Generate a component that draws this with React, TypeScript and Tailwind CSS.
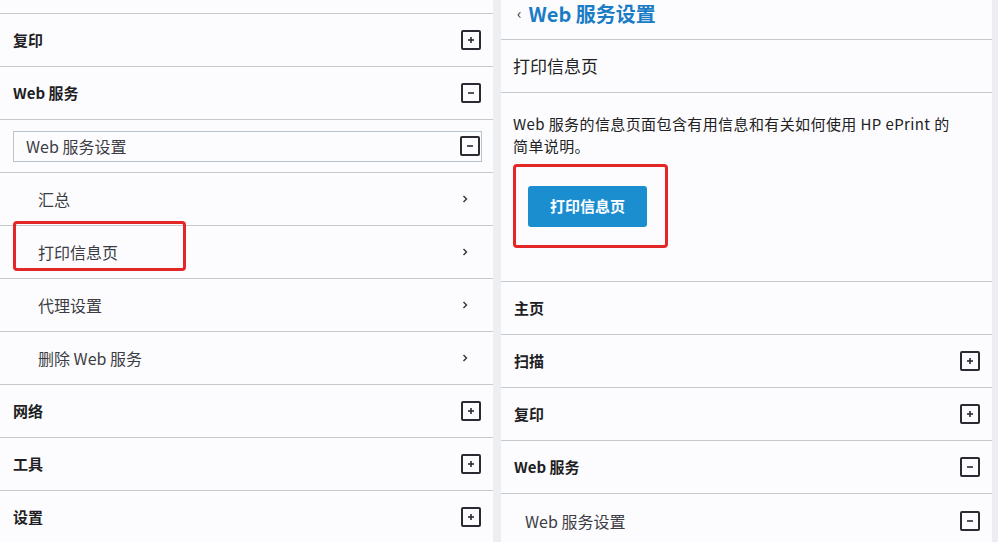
import React from "react";

const font = { fontFamily: '"Noto Sans CJK SC", "Noto Sans", sans-serif' };

function Box({ minus }: { minus?: boolean }) {
  return (
    <span className="flex h-[20px] w-[20px] items-center justify-center rounded-[2px] border-2 border-[#2a2a33]">
      <svg width="10" height="10" viewBox="0 0 10 10">
        <path d="M2 5h6" stroke="#2a2a33" strokeWidth="1.6" />
        {!minus && <path d="M5 2v6" stroke="#2a2a33" strokeWidth="1.6" />}
      </svg>
    </span>
  );
}

function Chevron() {
  return (
    <svg width="8" height="10" viewBox="0 0 8 10">
      <path d="M2.5 2l3 3-3 3" stroke="#333" strokeWidth="1.4" fill="none" />
    </svg>
  );
}

function Section({ label, minus, noIcon }: { label: string; minus?: boolean; noIcon?: boolean }) {
  return (
    <div className="flex h-[53px] shrink-0 items-center justify-between border-b border-[#c6cad0] pl-[13px] pr-[12px]">
      <span className="text-[15px] font-bold text-[#1e1e24]">{label}</span>
      {!noIcon && <Box minus={minus} />}
    </div>
  );
}

function Item({ label, boxed }: { label: string; boxed?: boolean }) {
  return (
    <div className="relative flex h-[53px] shrink-0 items-center justify-between border-b border-[#c6cad0] pl-[38px] pr-[24px]">
      <span className="text-[16px] text-[#3c3c44]">{label}</span>
      <Chevron />
      {boxed && (
        <div className="absolute left-[13px] top-[-5px] h-[50px] w-[173px] rounded-[4px] border-[3px] border-[#e32626]" />
      )}
    </div>
  );
}

export default function App() {
  return (
    <div className="flex h-[542px] w-[998px] overflow-hidden bg-[#eceef1]" style={font}>
      {/* left panel */}
      <div className="flex w-[493px] shrink-0 flex-col bg-[#fcfcfe]">
        <div className="h-[14px] shrink-0 border-b border-[#c6cad0]" />
        <Section label="复印" />
        <Section label="Web 服务" minus />
        <div className="flex h-[53px] shrink-0 items-center border-b border-[#c6cad0] pl-[13px] pr-[11px]">
          <div className="flex h-[31px] flex-1 items-center justify-between border border-[#b9c3cf] pl-[12px] pr-[1px]">
            <span className="text-[16px] text-[#3c3c44]">Web 服务设置</span>
            <Box minus />
          </div>
        </div>
        <Item label="汇总" />
        <Item label="打印信息页" boxed />
        <Item label="代理设置" />
        <Item label="删除 Web 服务" />
        <Section label="网络" />
        <Section label="工具" />
        <Section label="设置" />
      </div>

      {/* right panel */}
      <div className="ml-[8px] flex w-[491px] shrink-0 flex-col bg-[#fcfcfe]">
        <div className="flex h-[40px] shrink-0 items-center gap-[7px] border-b border-[#c6cad0] pb-[12px] pl-[16px]">
          <span className="text-[15px] text-[#333]">‹</span>
          <span className="text-[20px] font-bold text-[#1b7cc6]">Web 服务设置</span>
        </div>
        <div className="flex h-[53px] shrink-0 items-center border-b border-[#c6cad0] pl-[12px]">
          <span className="text-[17px] text-[#222]">打印信息页</span>
        </div>
        <div className="flex h-[189px] shrink-0 flex-col border-b border-[#c6cad0] pl-[12px] pr-[16px] pt-[20px]">
          <p className="text-[15px] leading-[22px] tracking-[0.4px] text-[#222]">
            Web 服务的信息页面包含有用信息和有关如何使用 HP ePrint 的
            <br />
            简单说明。
          </p>
          <div className="mt-[7px] flex h-[84px] w-[155px] items-center rounded-[4px] border-[3px] border-[#e32626] pl-[12px]">
            <button className="h-[41px] w-[119px] rounded-[3px] bg-[#1b8ed0] text-[15px] font-bold text-white">
              打印信息页
            </button>
          </div>
        </div>
        <Section label="主页" noIcon />
        <Section label="扫描" />
        <Section label="复印" />
        <Section label="Web 服务" minus />
        <div className="flex h-[53px] shrink-0 items-center justify-between pl-[24px] pr-[12px]">
          <span className="text-[16px] text-[#3c3c44]">Web 服务设置</span>
          <Box minus />
        </div>
      </div>
    </div>
  );
}
